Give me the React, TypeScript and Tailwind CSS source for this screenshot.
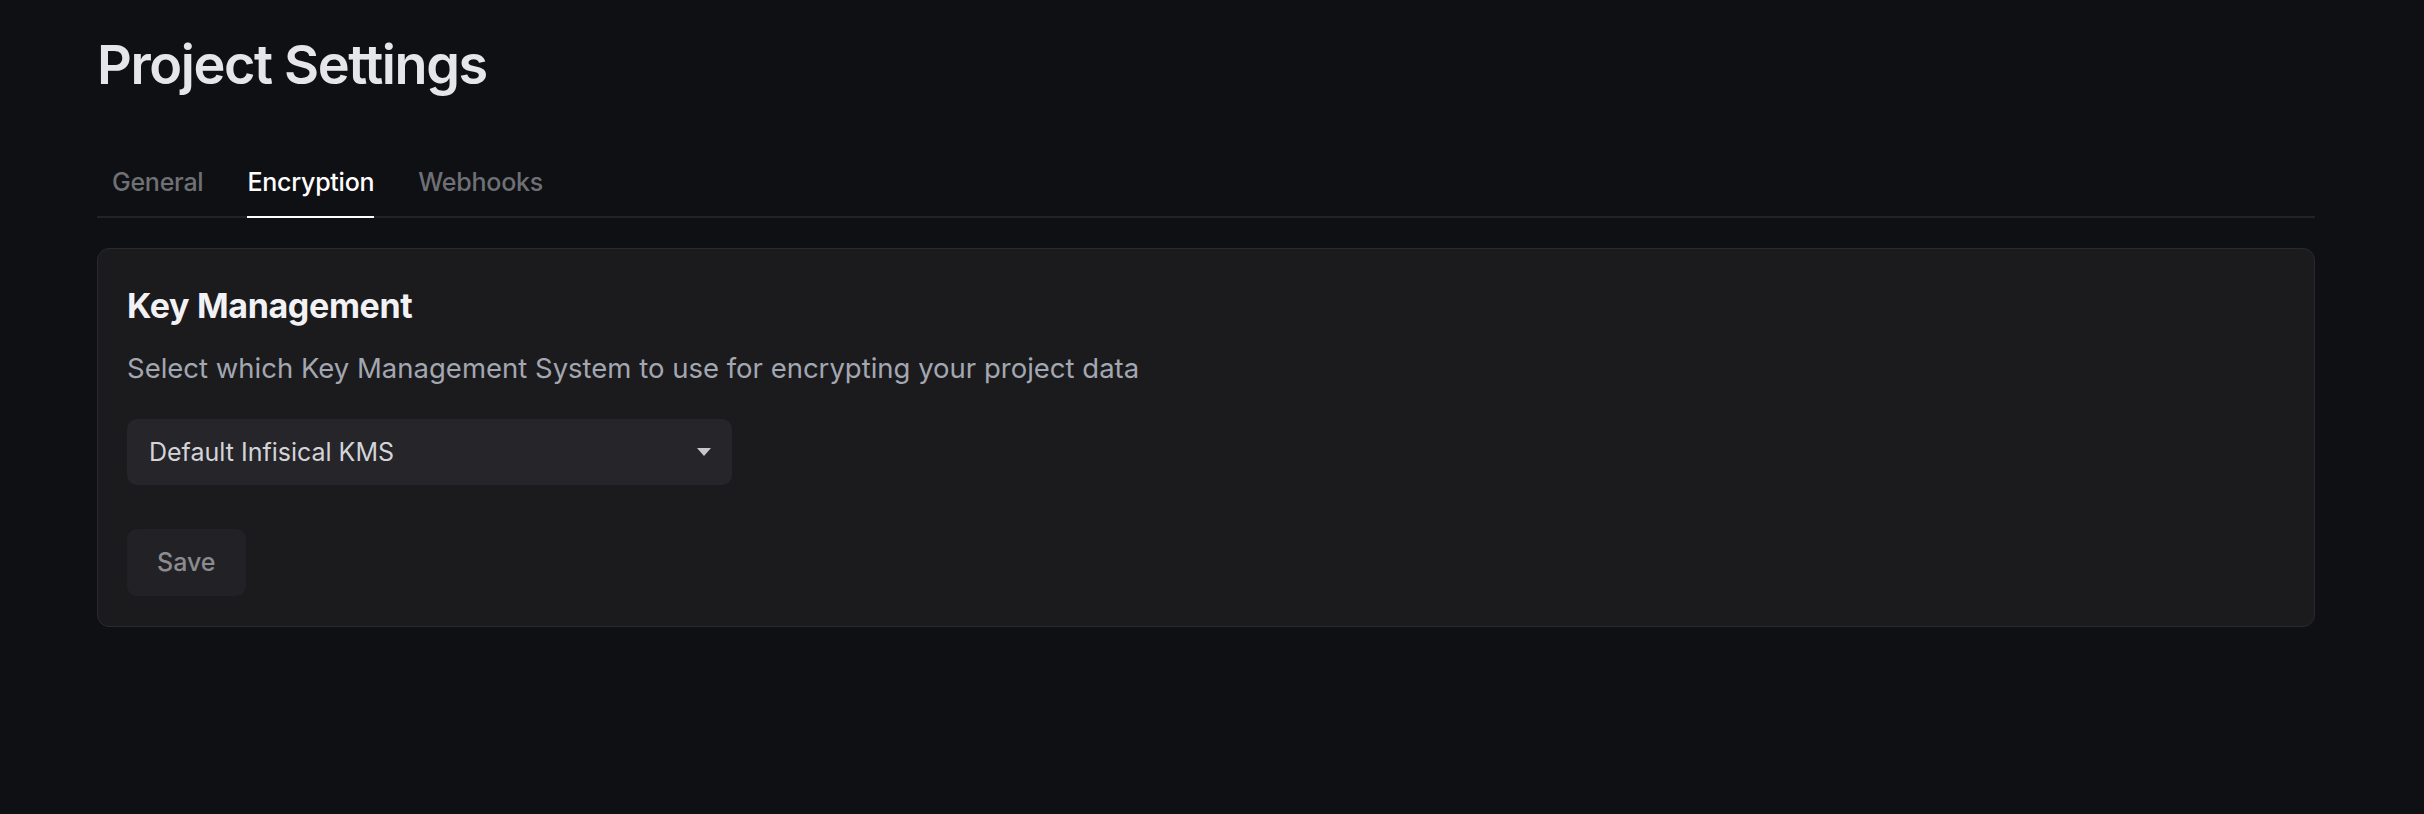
import React from "react";

export default function App() {
  const font = { fontFamily: "Inter, 'Noto Sans', sans-serif" };
  return (
    <div
      className="min-h-[814px] w-full bg-[#0f1014] pl-[97px] pr-[109px] pt-[38px]"
      style={font}
    >
      <h1 className="text-[54px] font-semibold leading-none tracking-[-0.026em] text-[#e6e6ea]">
        Project Settings
      </h1>

      <div className="mt-[75px] flex border-b-2 border-[#222328] pl-[15px] gap-[44px]">
        <button className="-mb-[2px] border-b-2 border-transparent pb-[19px] text-[25px] font-medium leading-[30px] tracking-[-0.01em] text-[#6f7075]">
          General
        </button>
        <button className="-mb-[2px] border-b-2 border-white pb-[19px] text-[25px] font-medium leading-[30px] tracking-[-0.01em] text-white">
          Encryption
        </button>
        <button className="-mb-[2px] border-b-2 border-transparent pb-[19px] text-[25px] font-medium leading-[30px] tracking-[-0.01em] text-[#6f7075]">
          Webhooks
        </button>
      </div>

      <div className="mt-[30px] rounded-[12px] border border-[#2a2a2e] bg-[#1b1b1e] px-[29px] pt-[37px] pb-[30px]">
        <h2 className="text-[34px] font-bold leading-[40px] tracking-[-0.01em] text-[#f2f2f4]">
          Key Management
        </h2>
        <p className="mt-[22px] text-[27.5px] leading-[1.5] text-[#a3a7b1]">
          Select which Key Management System to use for encrypting your project data
        </p>
        <div className="mt-[30px] flex h-[66px] w-[605px] items-center justify-between rounded-[10px] bg-[#25252a] pl-[22px] pr-[21px]">
          <span className="text-[25px] leading-none text-[#d4d4d8]">Default Infisical KMS</span>
          <svg width="14" height="8" viewBox="0 0 14 8" className="block">
            <path d="M0 0 H14 L7 8 Z" fill="#c8c8cc" />
          </svg>
        </div>
        <button className="mt-[44px] flex h-[67px] items-center rounded-[10px] bg-[#222226] px-[30px] text-[25px] font-medium leading-none text-[#8b8b90]">
          Save
        </button>
      </div>
    </div>
  );
}
